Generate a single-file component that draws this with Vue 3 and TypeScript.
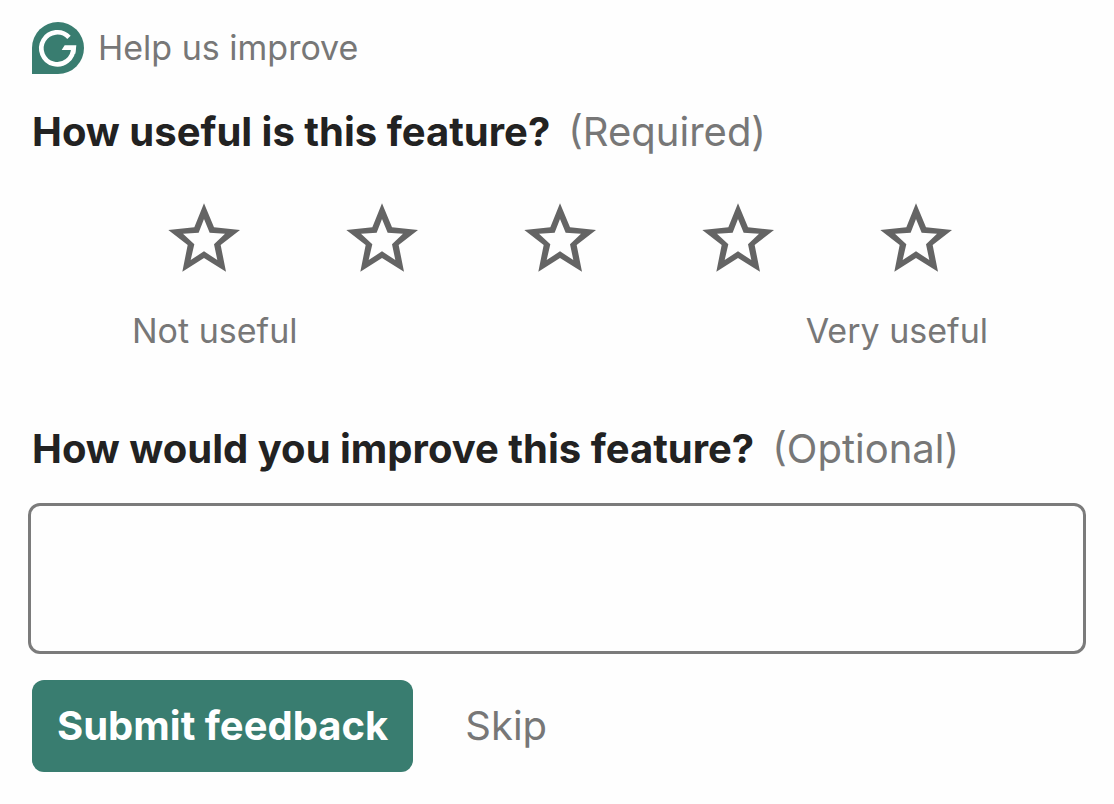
<script setup lang="ts">
import { ref } from 'vue'

const rating = ref<number | null>(null)
const comment = ref('')
const stars = [1, 2, 3, 4, 5]
</script>

<template>
  <form class="feedback" @submit.prevent>
    <header class="brand">
      <svg class="logo" viewBox="0 0 156 156" aria-hidden="true">
        <path d="M0 156V78A78 78 0 1 1 78 156Z" fill="#397d70" />
        <path
          d="M111 46A48 48 0 1 0 124 78"
          fill="none"
          stroke="#fff"
          stroke-width="14"
        />
        <path d="M98 70H133L130 95H117L118 84H89Z" fill="#fff" />
      </svg>
      <span>Help us improve</span>
    </header>

    <fieldset class="rating">
      <legend class="question">
        <strong>How useful is this feature?</strong>
        <span>(Required)</span>
      </legend>
      <div class="scale">
        <div class="stars">
          <label v-for="n in stars" :key="n" class="star">
            <input
              v-model="rating"
              type="radio"
              name="rating"
              :value="n"
              :aria-label="`${n} of 5`"
            />
            <svg viewBox="53 37 216 207" aria-hidden="true">
              <path
                :class="{ chosen: rating !== null && n <= rating }"
                d="M161 38L191 110L269 118L211 163L227 243L161 202L96 243L112 163L54 118L132 110ZM161 85L145 126L98 129L132 161L121 208L161 182L201 208L191 161L224 129L178 126Z"
              />
            </svg>
          </label>
        </div>
        <div class="ends">
          <span>Not useful</span>
          <span>Very useful</span>
        </div>
      </div>
    </fieldset>

    <label class="question" for="comment">
      <strong>How would you improve this feature?</strong>
      <span>(Optional)</span>
    </label>
    <textarea id="comment" v-model="comment"></textarea>

    <div class="actions">
      <button class="submit" type="submit">Submit feedback</button>
      <button class="skip" type="button">Skip</button>
    </div>
  </form>
</template>

<style>
body {
  margin: 0;
  background: #fefefe;
}
</style>

<style scoped>
.feedback {
  box-sizing: border-box;
  padding: 22px 28px 32px;
  font-family: Inter, 'Liberation Sans', sans-serif;
  color: #777;
}

.brand {
  display: flex;
  align-items: center;
  gap: 14px;
  padding-left: 4px;
  font-size: 34px;
  line-height: 52px;
}

.logo {
  width: 52px;
  height: 52px;
}

.rating {
  margin: 32px 0 0;
  padding: 0;
  border: 0;
  min-width: 0;
}

.question {
  display: flex;
  flex-wrap: wrap;
  gap: 18px;
  padding: 0 0 0 4px;
  font-size: 40px;
  line-height: 52px;
}

.question strong {
  font-weight: 700;
  color: #222;
}

.scale {
  max-width: 890px;
  margin: 45px auto 70px;
  padding-left: 6px;
}

.stars {
  display: grid;
  grid-template-columns: repeat(5, 1fr);
  justify-items: center;
}

.star {
  display: grid;
  cursor: pointer;
}

.star input,
.star svg {
  grid-area: 1 / 1;
  width: 72px;
  height: 69px;
  margin: 0;
}

.star input {
  appearance: none;
  cursor: pointer;
}

.star svg {
  pointer-events: none;
}

.star path {
  fill: #646464;
  fill-rule: evenodd;
}

.star path.chosen {
  fill-rule: nonzero;
}

.ends {
  display: flex;
  justify-content: space-between;
  margin-top: 37px;
  padding: 0 17px;
  font-size: 34px;
  line-height: 44px;
}

textarea {
  display: block;
  box-sizing: border-box;
  width: 100%;
  height: 151px;
  margin: 28px 0 26px;
  padding: 16px;
  border: 3px solid #7b7b7b;
  border-radius: 12px;
  background: transparent;
  color: #222;
  font: inherit;
  font-size: 34px;
  resize: none;
}

.actions {
  display: flex;
  align-items: center;
  gap: 52px;
  padding-left: 4px;
}

button {
  border: 0;
  font: inherit;
  font-size: 40px;
  line-height: 52px;
  cursor: pointer;
}

.submit {
  padding: 20px 25px;
  border-radius: 12px;
  background: #397d70;
  color: #fff;
  font-weight: 700;
}

.skip {
  padding: 20px 0;
  background: transparent;
  color: #777;
}
</style>
